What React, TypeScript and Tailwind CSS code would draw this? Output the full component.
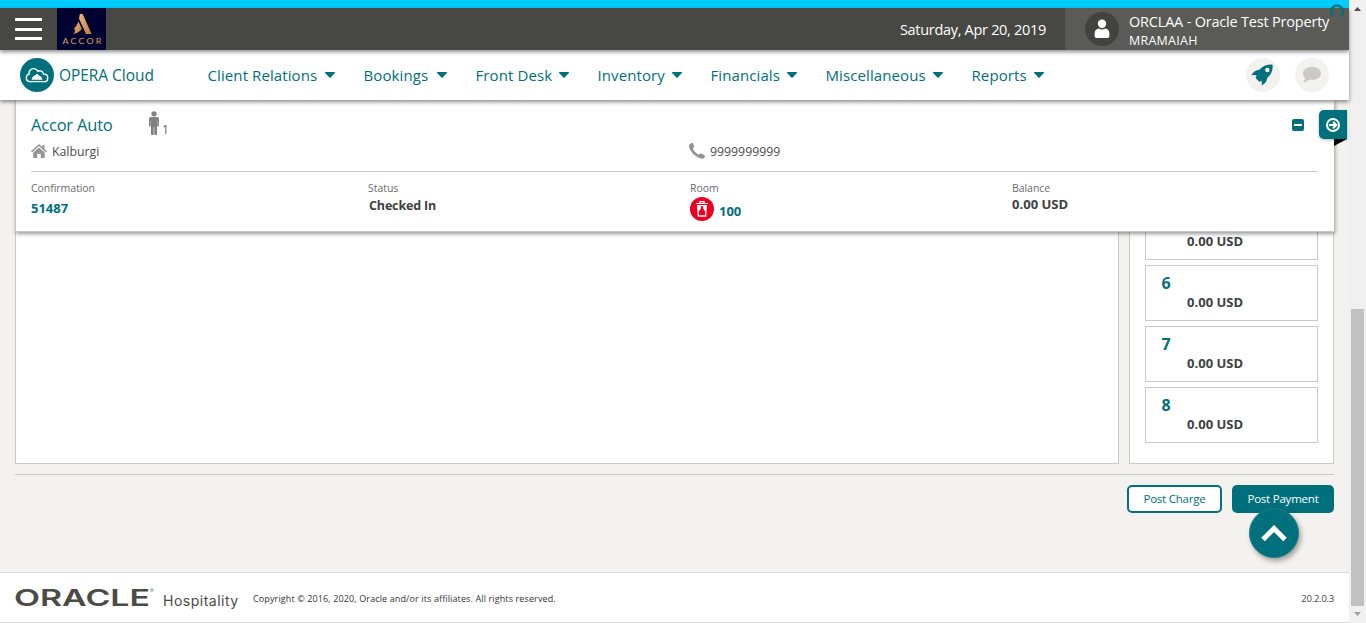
import type { ReactNode } from "react";

const menus: { label: string; width: string }[] = [
  { label: "Client Relations", width: "w-[128px]" },
  { label: "Bookings", width: "w-[84px]" },
  { label: "Front Desk", width: "w-[94px]" },
  { label: "Inventory", width: "w-[85px]" },
  { label: "Financials", width: "w-[87px]" },
  { label: "Miscellaneous", width: "w-[118px]" },
  { label: "Reports", width: "w-[73px]" },
];

function OperaMark() {
  return (
    <svg width="34" height="34" viewBox="0 0 34 34" className="shrink-0">
      <circle cx="17" cy="17" r="17" fill="#00707c" />
      <path
        d="M10.5 23.7 C7.8 23.7 6.3 21.8 6.3 19.8 C6.3 17.9 7.4 16.5 9.1 16.1 C8.7 13 10.7 10.6 13.5 10.6 C15.5 10.6 17 11.7 17.8 13.3 C20.2 12 23 13.3 23.5 16 C26.1 16 27.7 17.7 27.7 19.9 C27.7 22 26.2 23.7 24 23.7"
        fill="none"
        stroke="#fff"
        strokeWidth="1.4"
      />
      <path d="M11.6 21.8 C12 18.9 14 17.4 16.1 17.1 V16 H17.9 V17.1 C20 17.4 22 18.9 22.4 21.8 Z" fill="#fff" />
      <path d="M10.3 23.6 H23.8" stroke="#fff" strokeWidth="1.3" />
    </svg>
  );
}

function AccorLogo() {
  return (
    <svg width="49" height="42" viewBox="0 0 49 42" className="ml-[15px] shrink-0">
      <defs>
        <linearGradient id="gold" x1="0" x2="1" y1="0" y2="1">
          <stop offset="0" stopColor="#f0b878" />
          <stop offset="1" stopColor="#b97c42" />
        </linearGradient>
      </defs>
      <rect width="49" height="42" fill="#020230" />
      <path d="M22.8 6.2 C24 5.3 25.5 5.6 26.1 7 L34.6 26 H29 L22 10.5 Z" fill="url(#gold)" />
      <path d="M21.5 13.5 L24.8 20.7 C23.6 23.4 20.5 25.2 15.8 26 C18.5 24.4 18.8 22.6 17 20.6 C18.8 18.8 20 16.6 21.5 13.5 Z" fill="url(#gold)" />
      <g transform="translate(5.5 36.4) scale(1.18 1)">
        <text textLength="33" lengthAdjust="spacing" fontSize="7.6" fontFamily="Lato, sans-serif" fill="#d9a067">
          ACCOR
        </text>
      </g>
    </svg>
  );
}

function TopBar() {
  return (
    <header className="relative z-30 flex h-[42px] bg-[#474744] text-white shadow-[0_2px_4px_rgba(0,0,0,0.45)]">
      <div className="ml-[15px] mt-[10px] flex h-[22px] w-[27px] flex-col justify-between">
        <i className="h-[3px] bg-white" />
        <i className="h-[3px] bg-white" />
        <i className="h-[3px] bg-white" />
      </div>
      <AccorLogo />
      <div className="mr-[19px] mt-[11px] flex-1 text-right text-[14.5px] leading-[22px] tracking-[-0.3px]">Saturday, Apr 20, 2019</div>
      <div className="flex w-[284px] bg-[#5a5a56]">
        <svg width="34" height="34" viewBox="0 0 34 34" className="ml-[20px] mt-[4px] shrink-0">
          <circle cx="17" cy="17" r="17" fill="#42423f" />
          <circle cx="17" cy="11.8" r="4.2" fill="#fff" />
          <path d="M9.6 22 C9.6 18.5 11.5 16.8 13.8 16.6 Q17 18.4 20.2 16.6 C22.5 16.8 24.4 18.5 24.4 22 V24 Q24.4 26 22.4 26 H11.6 Q9.6 26 9.6 24 Z" fill="#fff" />
        </svg>
        <div className="ml-[10px] mt-[4px] whitespace-nowrap">
          <div className="text-[14.5px] leading-[20px] tracking-[-0.2px]">ORCLAA - Oracle Test Property</div>
          <div className="text-[12.5px] leading-[17px] tracking-[0.25px]">MRAMAIAH</div>
        </div>
      </div>
      <svg width="16" height="14" viewBox="0 0 16 14" className="absolute -top-[4px] right-[4px]">
        <path d="M3.8 11.8 A6 6 0 1 1 12.2 11.8" fill="none" stroke="#00707c" strokeWidth="2.3" strokeLinecap="round" />
      </svg>
    </header>
  );
}

function NavBar() {
  return (
    <nav className="relative z-20 flex h-[50px] items-center bg-white pl-[20px] text-[15px] text-[#00707c] shadow-[0_2px_4px_rgba(0,0,0,0.45)]">
      <OperaMark />
      <span className="ml-[5px] w-[148px] whitespace-nowrap pt-[2px] text-[15.5px] tracking-[-0.05px]">OPERA Cloud</span>
      <div className="flex gap-[28px]">
        {menus.map((m) => (
          <div key={m.label} className={`flex items-center justify-between whitespace-nowrap pl-[0.5px] tracking-[0.1px] ${m.width}`}>
            {m.label}
            <svg width="10" height="6" viewBox="0 0 10 6" className="shrink-0">
              <path d="M0.3 0 H9.7 Q10.3 0.5 9.6 1.3 L5.6 5.6 Q5 6.2 4.4 5.6 L0.4 1.3 Q-0.3 0.5 0.3 0Z" fill="#00707c" />
            </svg>
          </div>
        ))}
      </div>
      <div className="ml-auto mr-[20px] flex gap-[15px]">
        <svg width="34" height="34" viewBox="0 0 34 34">
          <circle cx="17" cy="17" r="17" fill="#f3f2ee" />
          <path
            d="M26.6 6.7 C21 5.7 16.5 8 13.4 11.8 C10 11.8 7.3 14 5.2 17.5 C7.5 16.8 9.2 16.9 10.6 17.5 L9.6 20 L13.3 23.8 L15.4 22.8 C16 24.2 16 26 15.5 27.5 C19.2 25.5 21.1 23 21.2 20 C25 16.8 27.2 12 26.6 6.7 Z"
            fill="#00707c"
          />
          <circle cx="21.3" cy="12" r="2.2" fill="#fff" />
        </svg>
        <svg width="34" height="34" viewBox="0 0 34 34">
          <circle cx="17" cy="17" r="17" fill="#f3f2ee" />
          <path d="M17 9 C22.2 9 26 11.7 26 15.4 C26 19.1 22.2 21.8 17 21.8 C16 21.8 15.1 21.7 14.2 21.5 C12.4 23.3 10.2 24.3 7.8 24.4 C9.2 23.2 10 21.8 10.1 20 C8.8 18.8 8 17.2 8 15.4 C8 11.7 11.8 9 17 9 Z" fill="#c9c9c9" />
        </svg>
      </div>
    </nav>
  );
}

function Field({ label, width, children }: { label: string; width: string; children: ReactNode }) {
  return (
    <div className={width}>
      <div className="text-[10.5px] leading-[14px] tracking-[-0.05px] text-[#6b6b6b]">{label}</div>
      {children}
    </div>
  );
}

function Summary() {
  return (
    <section className="relative z-10 mx-[15px] h-[132px] border-b border-l border-[#c6c6c6] bg-white pl-[15px] pr-[16px] shadow-[1px_2px_4px_rgba(0,0,0,0.4)]">
      <div className="flex h-[41px] pt-[10px]">
        <div className="w-[117px] whitespace-nowrap text-[16.5px] leading-[29px] tracking-[-0.2px] text-[#00707c]">Accor Auto</div>
        <svg width="12" height="25" viewBox="0 0 12 25" className="mt-px shrink-0">
          <circle cx="6" cy="2.8" r="2.6" fill="#808080" />
          <path d="M3 6 H9 Q11 6 11 8 V15 Q10.2 16 9.3 15 V9.5 H9 V23.5 Q7.7 25 6.3 23.5 V16 H5.7 V23.5 Q4.3 25 3 23.5 V9.5 H2.7 V15 Q1.8 16 1 15 V8 Q1 6 3 6 Z" fill="#808080" />
        </svg>
        <span className="ml-[2px] mt-[10px] text-[12px] leading-[19px] text-[#666]">1</span>
        <div className="ml-auto mr-[14px] mt-[9px] flex h-[12px] w-[12px] items-center justify-center rounded-[2px] bg-[#00707c]">
          <i className="h-[2px] w-[8px] bg-white" />
        </div>
      </div>
      <div className="flex h-[31px] border-b border-[#c9c9c9] text-[12.3px] leading-[22px] text-[#4c4c4c]">
        <div className="flex w-[658px]">
          <svg width="16" height="14" viewBox="0 0 16 14" className="mt-[3px]">
            <path d="M8 0 L11.5 3.2 V1 H13.5 V5 L16 7.3 L15 8.4 L8 2.1 L1 8.4 L0 7.3 Z" fill="#939393" />
            <path d="M8 3.4 L13.7 8.5 V14 H9.8 V9.7 H6.2 V14 H2.3 V8.5 Z" fill="#939393" />
          </svg>
          <span className="ml-[5px]">Kalburgi</span>
        </div>
        <svg width="16" height="16" viewBox="0 0 16 16" className="mt-[2px]">
          <path d="M1 0.8 Q2.5 -0.4 4 0.3 L5.3 3.6 Q5.2 4.6 3.8 5.3 Q4.8 9.1 9.8 11.8 Q11 10.4 12 10.5 L15.6 12.2 Q16.4 14 14.8 15.3 Q12.5 16.4 8.3 14 Q2 10.2 0.2 4.7 Q-0.3 2 1 0.8 Z" fill="#939393" />
        </svg>
        <span className="ml-[5px]">9999999999</span>
      </div>
      <div className="flex pt-[9px]">
        <Field label="Confirmation" width="w-[337px]">
          <div className="mt-[4px] text-[13px] font-bold leading-[18px] text-[#00707c]">51487</div>
        </Field>
        <Field label="Status" width="w-[322px]">
          <div className="ml-px mt-[2px] text-[12.5px] font-bold leading-[18px] tracking-[-0.15px] text-[#404040]">Checked In</div>
        </Field>
        <Field label="Room" width="w-[322px]">
          <div className="mt-[2px] flex">
            <svg width="24" height="24" viewBox="0 0 24 24">
              <circle cx="12" cy="12" r="12" fill="#ee0022" />
              <path d="M6 6.5 H18 M10 6.2 V4.6 H14 V6.2" fill="none" stroke="#fff" strokeWidth="1.2" />
              <path d="M7 8 H17 L16.3 19.8 H7.7 Z" fill="#fff" />
              <path d="M10.8 9.3 H13.2 V11.8 L15.2 14.6 V18.3 H8.8 V14.6 L10.8 11.8 Z" fill="#ee0022" />
            </svg>
            <span className="ml-[5px] mt-[5px] text-[13px] font-bold leading-[18px] text-[#00707c]">100</span>
          </div>
        </Field>
        <Field label="Balance" width="w-[150px]">
          <div className="text-[13px] font-bold leading-[18px] tracking-[0.02px] text-[#404040]">0.00 USD</div>
        </Field>
      </div>
    </section>
  );
}

const amountClass = "ml-[41px] text-[13px] font-bold leading-[18px] tracking-[0.02px] text-[#404040]";

function Windows() {
  return (
    <div className="flex h-[232px] gap-[10px] px-[15px]">
      <div className="flex-1 border border-t-0 border-[#c9c9c9] bg-white" />
      <div className="flex w-[205px] flex-col gap-[5px] border border-t-0 border-[#c9c9c9] bg-white px-[15px]">
        <div className="h-[28px] border border-t-0 border-[#c9c9c9]">
          <div className={amountClass}>0.00 USD</div>
        </div>
        {["6", "7", "8"].map((n) => (
          <div key={n} className="h-[56px] border border-[#c9c9c9] pt-[7px]">
            <div className="ml-[15.5px] text-[16px] font-bold leading-[20px] text-[#00707c]">{n}</div>
            <div className={amountClass}>0.00 USD</div>
          </div>
        ))}
      </div>
    </div>
  );
}

function Footer() {
  return (
    <footer className="mt-auto flex h-[51px] border-b border-t border-[#dcdcdc] bg-white pl-[14px] pr-[15px]">
      <svg width="141" height="34" viewBox="0 0 141 34" className="mt-[7px] shrink-0">
        <text x="0" y="25.5" textLength="136" lengthAdjust="spacingAndGlyphs" fontSize="23.5" fontWeight="600" fontFamily="Inter, sans-serif" fill="#4b4b46">
          ORACLE
        </text>
        <circle cx="138" cy="10" r="1.3" fill="none" stroke="#77776f" strokeWidth="0.7" />
      </svg>
      <span className="ml-[8px] mt-[18px] w-[90px] font-['Inter'] text-[14px] leading-[20px] tracking-[0.5px] text-[#4b4b46]">Hospitality</span>
      <span className="mt-[19px] whitespace-nowrap text-[9px] leading-[14px] tracking-[0.12px] text-[#333]">Copyright © 2016, 2020, Oracle and/or its affiliates. All rights reserved.</span>
      <span className="ml-auto mt-[19px] text-[9.5px] leading-[14px] tracking-[-0.25px] text-[#444]">20.2.0.3</span>
    </footer>
  );
}

function Scrollbar() {
  return (
    <div className="flex w-[17px] flex-col items-center bg-[#f0f0f0]">
      <svg width="17" height="17" viewBox="0 0 17 17">
        <path d="M8.5 7 L12 11 H5 Z" fill="#4d4d4d" />
      </svg>
      <div className="mt-[292px] h-[297px] w-[13px] bg-[#c1c1c1]" />
      <svg width="17" height="17" viewBox="0 0 17 17">
        <path d="M5 6 H12 L8.5 10 Z" fill="#a0a0a0" />
      </svg>
    </div>
  );
}

export default function App() {
  return (
    <div className="flex h-[623px] w-[1366px] overflow-hidden bg-[#f3f2ee] font-['Open_Sans',sans-serif]">
      <div className="relative flex w-[1349px] flex-col">
        <div className="h-[8px] shrink-0 bg-[#00ccff]" />
        <TopBar />
        <NavBar />
        <Summary />
        <Windows />
        <div className="mx-[15px] mt-[10px] flex justify-end gap-[10px] border-t border-[#c9c9c9] pt-[10px] text-[11.5px] tracking-[-0.22px]">
          <button className="h-[28px] w-[95px] rounded-[5px] border-2 border-[#00707c] bg-white text-[#00707c]">Post Charge</button>
          <button className="h-[28px] w-[102px] rounded-[5px] bg-[#00707c] text-white">Post Payment</button>
        </div>
        <Footer />
        <div className="absolute right-[2px] top-[110px] z-20">
          <div className="flex h-[29px] w-[28px] items-center justify-center rounded-l-[5px] bg-[#00707c] shadow-[0_1px_3px_rgba(0,0,0,0.3)]">
            <svg width="14" height="14" viewBox="0 0 14 14">
              <circle cx="7" cy="7" r="6" fill="none" stroke="#fff" strokeWidth="2" />
              <path d="M3 7 H10 M7 3.7 L10.3 7 L7 10.3" fill="none" stroke="#fff" strokeWidth="2" />
            </svg>
          </div>
          <svg width="13" height="7" viewBox="0 0 13 7" className="ml-auto">
            <path d="M0 0 H13 L0 7 Z" fill="#000" />
          </svg>
        </div>
        <div className="absolute right-[50px] top-[508px] z-20 flex h-[50px] w-[50px] items-center justify-center rounded-full border border-[#1d808a] bg-[#00707c] shadow-[2px_3px_5px_rgba(0,0,0,0.35)]">
          <svg width="26" height="17" viewBox="0 0 26 17">
            <path d="M2 14.5 L13 3.5 L24 14.5" fill="none" stroke="#fff" strokeWidth="5" />
          </svg>
        </div>
      </div>
      <Scrollbar />
    </div>
  );
}
